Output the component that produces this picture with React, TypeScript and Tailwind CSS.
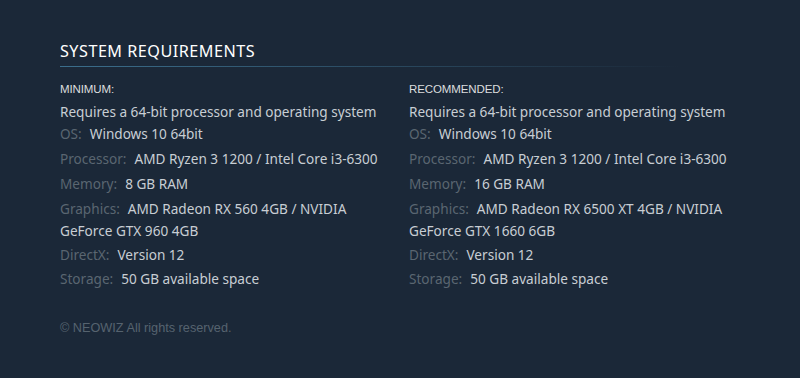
import React from 'react';

type Req = { label?: string; value: string };

const MINIMUM: Req[] = [
  { value: 'Requires a 64-bit processor and operating system' },
  { label: 'OS:', value: 'Windows 10 64bit' },
  { label: 'Processor:', value: 'AMD Ryzen 3 1200 / Intel Core i3-6300' },
  { label: 'Memory:', value: '8 GB RAM' },
  { label: 'Graphics:', value: 'AMD Radeon RX 560 4GB / NVIDIA GeForce GTX 960 4GB' },
  { label: 'DirectX:', value: 'Version 12' },
  { label: 'Storage:', value: '50 GB available space' },
];

const RECOMMENDED: Req[] = [
  { value: 'Requires a 64-bit processor and operating system' },
  { label: 'OS:', value: 'Windows 10 64bit' },
  { label: 'Processor:', value: 'AMD Ryzen 3 1200 / Intel Core i3-6300' },
  { label: 'Memory:', value: '16 GB RAM' },
  { label: 'Graphics:', value: 'AMD Radeon RX 6500 XT 4GB / NVIDIA GeForce GTX 1660 6GB' },
  { label: 'DirectX:', value: 'Version 12' },
  { label: 'Storage:', value: '50 GB available space' },
];

const ReqColumn: React.FC<{ title: string; items: Req[] }> = ({ title, items }) => (
  <div className="w-[349px]">
    <div className="text-[11.5px] leading-[14px] uppercase text-[#dcdedf] font-['Liberation_Sans',Arial,sans-serif] tracking-[-0.01em]">
      {title}
    </div>
    <ul className="mt-[5px] flex flex-col gap-[3px]">
      {items.map((item, i) => (
        <li
          key={i}
          className={`w-[335px] text-[13.6px] leading-[22px] text-[#c8ced4] ${i === 1 ? '-mt-[3px]' : ''} ${i === 5 ? '-mt-[1px]' : ''} ${i === 6 ? '-mt-[1px]' : ''}`}
        >
          {item.label && <span className="text-[#5a6671] mr-[8px]">{item.label}</span>}
          {item.value}
        </li>
      ))}
    </ul>
  </div>
);

export default function App() {
  return (
    <div className="w-[800px] h-[378px] bg-[#1b2838] font-['Noto_Sans','Open_Sans',sans-serif] pl-[60px] pt-[40px]">
      <h2 className="text-[16.2px] leading-[22px] uppercase tracking-[0.03em] text-[#ffffff] font-normal">
        System Requirements
      </h2>
      <div className="mt-[4px] h-px w-[620px] bg-gradient-to-r from-[#3b6e8c] to-[#3b6e8c]/0" />
      <div className="mt-[15px] flex">
        <ReqColumn title="Minimum:" items={MINIMUM} />
        <ReqColumn title="Recommended:" items={RECOMMENDED} />
      </div>
      <div className="mt-[31px] text-[12.7px] leading-[14px] text-[#56636f] font-['Liberation_Sans',Arial,sans-serif]">
        © NEOWIZ All rights reserved.
      </div>
    </div>
  );
}
